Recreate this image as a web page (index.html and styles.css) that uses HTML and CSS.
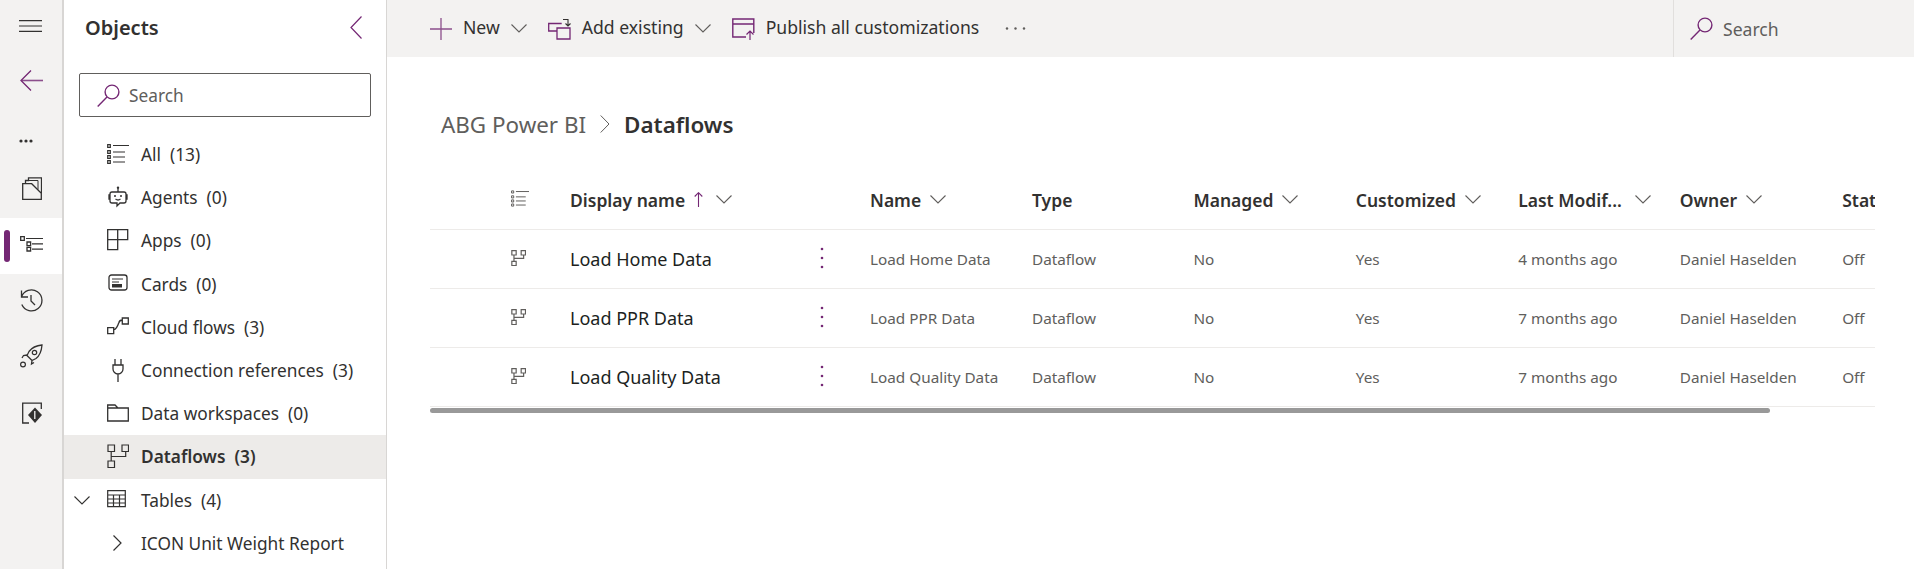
FILE: index.html
```html
<!DOCTYPE html>
<html lang="en">
<head>
    <meta charset="UTF-8">
    <title>ABG Power BI - Dataflows</title>
    <link rel="stylesheet" href="styles.css">
</head>
<body>

    <svg class="sprite" width="0" height="0">
        <symbol id="flow" viewBox="0 0 22 24">
            <path d="M1 1h6.500v6.500H1zM15 1h6.500v6.500H15zM1 17h6.500v6.500H1zM4.200 7.500V17M4.200 12.500h14.500v-5" fill="none" stroke="currentColor" stroke-width="1.200" vector-effect="non-scaling-stroke"/>
        </symbol>
        <symbol id="list" viewBox="0 0 22 20">
            <path d="M.7.7h2.600v2.600H.7zM.7 6.700h2.600v2.600H.7zM.7 11.700h2.600v2.600H.7zM.7 16.700h2.600v2.600H.7z" fill="none" stroke="currentColor" stroke-width="1.200"/>
            <path d="M6 1.500h16M6 8h12M6 13h12M6 18h12" fill="none" stroke="currentColor" stroke-width="1.200"/>
        </symbol>
        <symbol id="lens" viewBox="0 0 23 23">
            <circle cx="15" cy="8" r="6.900" fill="none" stroke="currentColor" stroke-width="1.400"/>
            <path d="M10 13 .7 22.400" fill="none" stroke="currentColor" stroke-width="1.400"/>
        </symbol>
        <symbol id="chev" viewBox="0 0 16 9">
            <path d="M.5.5 8 8 15.500.5" fill="none" stroke="currentColor" stroke-width="1.100"/>
        </symbol>
    </svg>

    <div class="rail">
        <div class="rail-item rail-menu">
            <svg width="23" height="12"><path d="M0 .6h23M0 6h23M0 11.400h23" stroke="#323130" stroke-width="1.200"/></svg>
        </div>
        <div class="rail-item rail-back">
            <svg width="23" height="21"><path d="M2 10.500h21" stroke="#8c4f8c" stroke-width="1.600"/><path d="M11 .5 1 10.500l10 10" fill="none" stroke="#742774" stroke-width="1.300"/></svg>
        </div>
        <div class="rail-item rail-more">
            <svg width="14" height="4"><circle cx="2" cy="2" r="1.600" fill="#323130"/><circle cx="7" cy="2" r="1.600" fill="#323130"/><circle cx="12" cy="2" r="1.600" fill="#323130"/></svg>
        </div>
        <div class="rail-item rail-folder">
            <svg width="20" height="23" viewBox="0 0 20 23"><path d="M.7 6.700h9l9.600 9.600v6H.7zM3.500 6.500v-3h3V.8h13v15.500" fill="none" stroke="#323130" stroke-width="1.300"/><path d="M6.500 3.500H16v9" fill="none" stroke="#323130" stroke-width="1"/></svg>
        </div>
        <div class="rail-item rail-active">
            <span class="rail-mark"></span>
            <svg width="23" height="16" viewBox="0 0 23 16"><path d="M.7.7h3.600v3.600H.7zM7 6h3.600v3.600H7zM7 11.400h3.600V15H7z" fill="none" stroke="#323130" stroke-width="1.300"/><path d="M6 2.500h17M12 7.800h11M12 13.200h11" stroke="#323130" stroke-width="1.200"/></svg>
        </div>
        <div class="rail-item rail-history">
            <svg width="23" height="23" viewBox="0 0 23 23"><path d="M1.500 8A10.500 10.500 0 1 1 1.800 15.500M1.500 1.500V8H8M11 6v6l4 4" fill="none" stroke="#323130" stroke-width="1.300"/></svg>
        </div>
        <div class="rail-item rail-rocket">
            <svg width="23" height="24" viewBox="0 0 23 24"><path d="M22 1c-6 .5-10 2.500-13 6.500l-2 4 5 5 4-2c4-3 5.500-7.500 6-13.500zM7 11l-3.500.5L2 14M12 16.500l-.5 3.500 2.500-1.500" fill="none" stroke="#323130" stroke-width="1.300"/><circle cx="14.500" cy="8.500" r="2.200" fill="none" stroke="#323130" stroke-width="1.200"/><circle cx="3" cy="20.500" r="2.400" fill="none" stroke="#323130" stroke-width="1.200"/></svg>
        </div>
        <div class="rail-item rail-check">
            <svg width="20" height="23" viewBox="0 0 20 23"><path d="M7 21H.7V1.200h18.600V7" fill="none" stroke="#323130" stroke-width="1.300"/><path d="M13 5.500l7 7.500-7 8-7-8z" fill="#323130"/><path d="M12.800 9v8" stroke="#f3f2f1" stroke-width="1.300"/></svg>
        </div>
    </div>

    <nav class="objects">
        <div class="objects-head">
            <h2>Objects</h2>
            <svg class="objects-close" width="12" height="23"><path d="M11.500.5 1 11.500l10.500 11" fill="none" stroke="#742774" stroke-width="1.200"/></svg>
        </div>
        <div class="objects-search">
            <svg class="lens" width="23" height="23"><use href="#lens"/></svg>
            <span>Search</span>
        </div>
        <ul class="tree">
            <li><svg class="tree-icon" width="22" height="20"><use href="#list"/></svg>All&nbsp; (13)</li>
            <li><svg class="tree-icon" width="22" height="22" viewBox="0 0 22 22"><path d="M5 6h12a2 2 0 0 1 2 2v7a2 2 0 0 1-2 2h-4l-3 3v-3H5a2 2 0 0 1-2-2V8a2 2 0 0 1 2-2zM11 6V2.500M3 9H2v4h1M19 9h1v4h-1M8.500 13c1.500 1.200 3.500 1.200 5 0" fill="none" stroke="currentColor" stroke-width="1.300"/><circle cx="11" cy="1.800" r="1.200" fill="currentColor"/><circle cx="8" cy="10" r="1" fill="currentColor"/><circle cx="14" cy="10" r="1" fill="currentColor"/></svg>Agents&nbsp; (0)</li>
            <li><svg class="tree-icon" width="22" height="22" viewBox="0 0 22 22"><path d="M.7.7h20v10h-10v10H.7zM.7 10.700h10M10.700.7v10" fill="none" stroke="currentColor" stroke-width="1.300"/></svg>Apps&nbsp; (0)</li>
            <li><svg class="tree-icon" width="22" height="18" viewBox="0 0 22 18"><rect x="2" y="1" width="18" height="15" rx="2.500" fill="none" stroke="currentColor" stroke-width="1.300"/><path d="M5 5h11M5 8h7" stroke="currentColor" stroke-width="1"/><path d="M5 10h10v3.500H5z" fill="currentColor"/></svg>Cards&nbsp; (0)</li>
            <li><svg class="tree-icon" width="22" height="18" viewBox="0 0 22 18"><path d="M.7 10.700h6v6h-6zM15.300 1h6v6h-6zM6.700 13c3-1 4-4 5-7 .5-2 1.500-3 3.600-3" fill="none" stroke="currentColor" stroke-width="1.300"/></svg>Cloud flows&nbsp; (3)</li>
            <li><svg class="tree-icon" width="22" height="24" viewBox="0 0 22 24"><path d="M6 7h10v4a5 5 0 0 1-10 0zM8 1v6M14 1v6M11 16v8" fill="none" stroke="currentColor" stroke-width="1.300"/></svg>Connection references&nbsp; (3)</li>
            <li><svg class="tree-icon" width="22" height="18" viewBox="0 0 22 18"><path d="M.7 1H8l3 3h10.300v13H.7zM.7 4H11" fill="none" stroke="currentColor" stroke-width="1.300"/></svg>Data workspaces&nbsp; (0)</li>
            <li class="tree-selected"><svg class="tree-icon" width="22" height="24"><use href="#flow"/></svg>Dataflows&nbsp; (3)</li>
            <li class="tree-group">
                <svg class="tree-toggle" width="16" height="9"><use href="#chev"/></svg>
                <svg class="tree-icon" width="20" height="18" viewBox="0 0 20 18"><path d="M.7.7h17.600v16H.7zM.7 5h17.600M.7 9h17.600M.7 13h17.600M6.500 5v12M12.500 5v12" fill="none" stroke="currentColor" stroke-width="1.200"/></svg>Tables&nbsp; (4)
            </li>
            <li class="tree-child">
                <svg class="tree-arrow" width="9" height="16" viewBox="0 0 9 16"><path d="M.5.5 8 8 .5 15.500" fill="none" stroke="currentColor" stroke-width="1.200"/></svg>ICON Unit Weight Report
            </li>
        </ul>
    </nav>

    <div class="main">
        <div class="commandbar">
            <div class="cmd">
                <svg class="cmd-icon" width="22" height="22"><path d="M11 0v22M0 11h22" stroke="#8c4f8c" stroke-width="1.300"/></svg>
                <span>New</span>
                <svg class="cmd-chev" width="16" height="9"><use href="#chev"/></svg>
            </div>
            <div class="cmd">
                <svg class="cmd-icon" width="23" height="22" viewBox="0 0 23 22"><path d="M9 13H.7V5.500h13M9 10h13v11H9z" fill="none" stroke="#742774" stroke-width="1.300"/><path d="M15 1.500h5v6M17.500 5.500L20 8l2.500-2.500" fill="none" stroke="#323130" stroke-width="1.100"/></svg>
                <span>Add existing</span>
                <svg class="cmd-chev" width="16" height="9"><use href="#chev"/></svg>
            </div>
            <div class="cmd">
                <svg class="cmd-icon" width="23" height="22" viewBox="0 0 23 22"><path d="M14 19H.8V1h21v14M.8 6h21" fill="none" stroke="#742774" stroke-width="1.400"/><path d="M18 22v-9M14.500 16.500L18 13l3.500 3.500" fill="none" stroke="#742774" stroke-width="1.200"/></svg>
                <span>Publish all customizations</span>
            </div>
            <svg class="cmd-more" width="21" height="3"><circle cx="2" cy="1.500" r="1.200" fill="#605e5c"/><circle cx="10.500" cy="1.500" r="1.200" fill="#605e5c"/><circle cx="19" cy="1.500" r="1.200" fill="#605e5c"/></svg>
            <div class="cmd-search">
                <svg class="lens" width="23" height="23"><use href="#lens"/></svg>
                <span>Search</span>
            </div>
        </div>

        <div class="crumbs">
            <span class="crumb">ABG Power BI</span>
            <svg width="10" height="18" viewBox="0 0 10 18"><path d="M.7.5 9 9 .7 17.500" fill="none" stroke="#605e5c" stroke-width="1"/></svg>
            <strong>Dataflows</strong>
        </div>

        <div class="grid">
            <div class="row row-head">
                <span></span>
                <svg class="flow-icon" width="18" height="17"><use href="#list"/></svg>
                <span class="th">Display name<svg class="sort" width="9" height="15" viewBox="0 0 9 15"><path d="M4.500 15V1M.7 4.500l3.800-3.800 3.800 3.800" fill="none" stroke="#742774" stroke-width="1.100"/></svg><svg width="16" height="9"><use href="#chev"/></svg></span>
                <span></span>
                <span class="th">Name<svg width="16" height="9"><use href="#chev"/></svg></span>
                <span class="th">Type</span>
                <span class="th">Managed<svg width="16" height="9"><use href="#chev"/></svg></span>
                <span class="th">Customized<svg width="16" height="9"><use href="#chev"/></svg></span>
                <span class="th th-wide">Last Modif...<svg width="16" height="9"><use href="#chev"/></svg></span>
                <span class="th">Owner<svg width="16" height="9"><use href="#chev"/></svg></span>
                <span class="th">Status</span>
            </div>
            <div class="row">
                <span></span>
                <svg class="flow-icon" width="15" height="16"><use href="#flow"/></svg>
                <span class="name">Load Home Data</span>
                <svg class="kebab" width="4" height="22"><circle cx="2" cy="2" r="1.300"/><circle cx="2" cy="11" r="1.300"/><circle cx="2" cy="20" r="1.300"/></svg>
                <span>Load Home Data</span><span>Dataflow</span><span>No</span><span>Yes</span><span>4 months ago</span><span>Daniel Haselden</span><span>Off</span>
            </div>
            <div class="row">
                <span></span>
                <svg class="flow-icon" width="15" height="16"><use href="#flow"/></svg>
                <span class="name">Load PPR Data</span>
                <svg class="kebab" width="4" height="22"><circle cx="2" cy="2" r="1.300"/><circle cx="2" cy="11" r="1.300"/><circle cx="2" cy="20" r="1.300"/></svg>
                <span>Load PPR Data</span><span>Dataflow</span><span>No</span><span>Yes</span><span>7 months ago</span><span>Daniel Haselden</span><span>Off</span>
            </div>
            <div class="row">
                <span></span>
                <svg class="flow-icon" width="15" height="16"><use href="#flow"/></svg>
                <span class="name">Load Quality Data</span>
                <svg class="kebab" width="4" height="22"><circle cx="2" cy="2" r="1.300"/><circle cx="2" cy="11" r="1.300"/><circle cx="2" cy="20" r="1.300"/></svg>
                <span>Load Quality Data</span><span>Dataflow</span><span>No</span><span>Yes</span><span>7 months ago</span><span>Daniel Haselden</span><span>Off</span>
            </div>
            <div class="scrollbar"></div>
        </div>
    </div>

</body>
</html>
```
FILE: styles.css
```css
* {
    box-sizing: border-box;
}

body {
    margin: 0;
    height: 569px;
    overflow: hidden;
    display: flex;
    font-family: "Noto Sans", "Open Sans", sans-serif;
    color: #323130;
    background-color: #fff;
}

svg {
    display: block;
    flex: none;
}

.sprite {
    position: absolute;
}

/* --- left icon rail --- */
.rail {
    width: 64px;
    flex: none;
    background-color: #f3f2f1;
    border-right: 2px solid #d8d6d4;
}

.rail-item {
    display: flex;
    padding-left: 19px;
}

.rail-menu { padding-top: 20px; }
.rail-back { padding-top: 38px; padding-left: 20px; }
.rail-more { padding-top: 48px; }
.rail-folder { padding-top: 34px; padding-left: 22px; }

.rail-active {
    height: 56px;
    margin-top: 18px;
    padding-left: 4px;
    align-items: center;
    background-color: #fff;
}

.rail-active svg {
    margin-top: -4px;
}

.rail-mark {
    width: 6px;
    height: 32px;
    margin-right: 10px;
    border-radius: 3px;
    background-color: #742774;
}

.rail-history { padding-top: 15px; padding-left: 20px; }
.rail-rocket { padding-top: 32px; padding-left: 20px; }
.rail-check { padding-top: 34px; padding-left: 22px; }

/* --- objects panel --- */
.objects {
    width: 323px;
    flex: none;
    border-right: 1px solid #d8d6d4;
}

.objects-head {
    height: 73px;
    padding: 16px 24px 0 21px;
    display: flex;
    justify-content: space-between;
}

.objects-head h2 {
    margin: -3px 0 0;
    font-size: 20px;
    line-height: 30px;
    font-weight: 600;
}

.objects-search {
    height: 44px;
    margin: 0 15px;
    padding-left: 17px;
    display: flex;
    align-items: center;
    gap: 9px;
    border: 1px solid #605e5c;
    border-radius: 2px;
    font-size: 17.3px;
    color: #605e5c;
}

.lens {
    color: #742774;
}

.tree {
    list-style: none;
    margin: 16px 0 0;
    padding: 0;
    font-size: 17.3px;
}

.tree li {
    height: 43.2px;
    padding-left: 43px;
    display: flex;
    align-items: center;
    white-space: nowrap;
}

.tree-icon {
    margin: -2px 12px 0 0;
}

.tree .tree-selected {
    background-color: #edebe9;
    font-weight: 600;
}

.tree .tree-group {
    padding-left: 10px;
}

.tree-toggle {
    margin-right: 17px;
}

.tree-group .tree-icon {
    margin-right: 14px;
}

.tree .tree-child {
    padding-left: 49px;
}

.tree-arrow {
    margin-right: 19px;
}

/* --- command bar --- */
.main {
    flex: 1;
    min-width: 0;
}

.commandbar {
    height: 57px;
    padding-left: 43px;
    display: flex;
    align-items: center;
    background-color: #f3f2f1;
    font-size: 17.6px;
}

.cmd {
    display: flex;
    align-items: center;
    margin-right: 21px;
}

.cmd span {
    margin-top: -3px;
}

.cmd-icon {
    margin-right: 11px;
}

.cmd-chev {
    margin-left: 11px;
    color: #605e5c;
}

.cmd-more {
    margin-left: 5px;
}

.cmd-search {
    height: 57px;
    margin-left: auto;
    width: 241px;
    padding-left: 16px;
    display: flex;
    align-items: center;
    gap: 10px;
    border-left: 1px solid #e1dfdd;
    color: #605e5c;
}

/* --- breadcrumb --- */
.crumbs {
    margin: 50px 0 0 54px;
    height: 34px;
    display: flex;
    align-items: center;
    gap: 14px;
    font-size: 22.4px;
}

.crumb {
    color: #605e5c;
}

.crumbs strong {
    font-weight: 600;
}

/* --- data grid --- */
.grid {
    width: 1445px;
    margin: 29px 0 0 43px;
    overflow: hidden;
}

.row {
    width: 1600px;
    height: 59px;
    display: grid;
    grid-template-columns: 81px 60px 251px 49px 161px 162.4px 162.4px 162.4px 161.6px 162.4px 100px;
    align-items: center;
    border-bottom: 1px solid #edebe9;
    font-size: 15.3px;
    color: #605e5c;
    white-space: nowrap;
}

.row-head {
    height: 60px;
}

.row > svg {
    margin-top: -3px;
}

.row > span:nth-child(n+3) {
    margin-left: -1px;
}

.row > span:nth-child(6) {
    margin-left: 0;
}

.th {
    display: flex;
    align-items: center;
    gap: 9px;
    font-size: 17.5px;
    font-weight: 600;
    color: #323130;
}

.th svg {
    color: #605e5c;
}

.th-wide {
    gap: 13px;
}

.name {
    font-size: 18px;
    color: #201f1e;
}

.flow-icon {
    color: #605e5c;
}

.kebab {
    fill: #742774;
    margin-left: -2px;
}

.sort {
    margin-right: 4px;
}

.scrollbar {
    width: 1340px;
    height: 5px;
    margin-top: 1px;
    border-radius: 3px;
    background-color: #999;
}
```
